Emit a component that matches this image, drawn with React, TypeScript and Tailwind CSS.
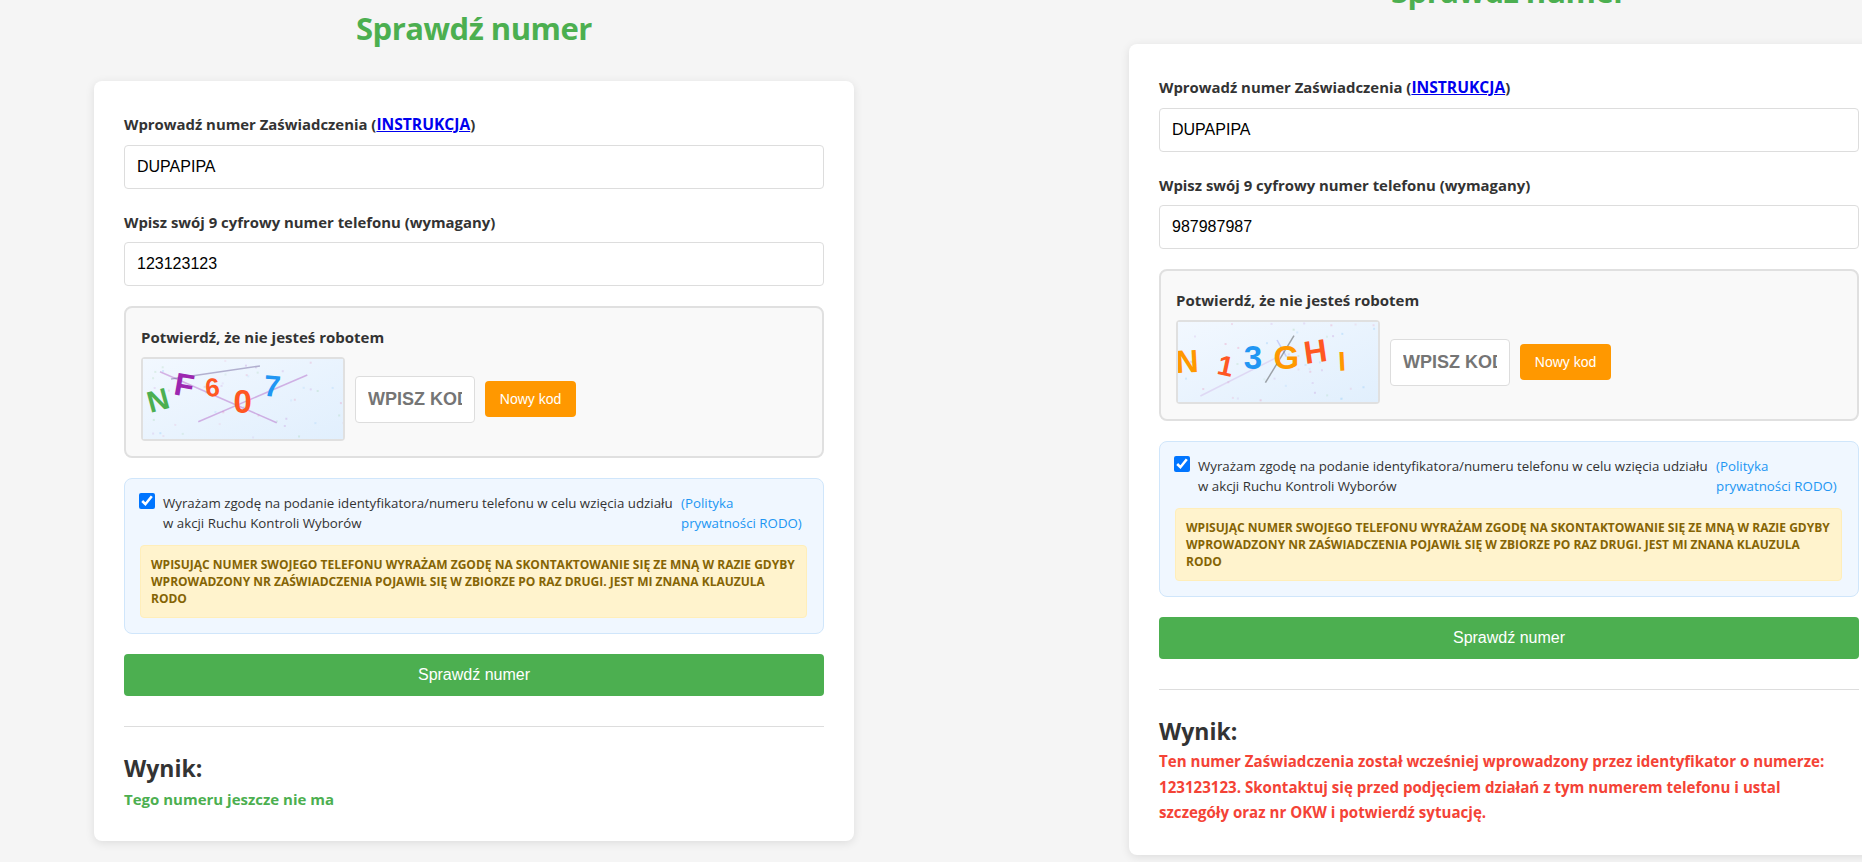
import React from 'react';

type Glyph = { ch: string; x: number; y: number; size: number; rot: number; color: string };
type Stroke = { x1: number; y1: number; x2: number; y2: number; color: string; width: number };

// Losowe kropki tła captcha, ze stałym ziarnem
function makeDots(seed: number) {
  const colors = ['#2196F3', '#9C27B0', '#4CAF50', '#E91E63'];
  let s = seed;
  const next = () => {
    s = (s * 1103515245 + 12345) % 2147483648;
    return s / 2147483648;
  };
  return Array.from({ length: 46 }, () => ({
    x: next() * 200,
    y: next() * 80,
    color: colors[Math.floor(next() * 4)],
    o: 0.06 + next() * 0.1,
  }));
}

function Captcha({ id, seed, glyphs, strokes }: { id: string; seed: number; glyphs: Glyph[]; strokes: Stroke[] }) {
  return (
    <div className="w-[204px] h-[84px] shrink-0 border-2 border-[#e0e0e0] rounded">
      <svg width="200" height="80" viewBox="0 0 200 80" className="block">
        <defs>
          <linearGradient id={id} x1="0" y1="0" x2="1" y2="1">
            <stop offset="0" stopColor="#f2f8ff" />
            <stop offset="1" stopColor="#e1effd" />
          </linearGradient>
        </defs>
        <rect width="200" height="80" fill={`url(#${id})`} />
        {makeDots(seed).map((d, i) => (
          <rect key={i} x={d.x} y={d.y} width="2" height="2" fill={d.color} opacity={d.o} />
        ))}
        {strokes.map((l, i) => (
          <line key={i} x1={l.x1} y1={l.y1} x2={l.x2} y2={l.y2} stroke={l.color} strokeWidth={l.width} />
        ))}
        {glyphs.map((g, i) => (
          <text
            key={i}
            x={0}
            y={0}
            transform={`translate(${g.x} ${g.y}) rotate(${g.rot})`}
            textAnchor="middle"
            dominantBaseline="central"
            fontFamily="'Liberation Sans', Arial, sans-serif"
            fontWeight="700"
            fontSize={g.size}
            fill={g.color}
          >
            {g.ch}
          </text>
        ))}
      </svg>
    </div>
  );
}

function Panel({
  phone,
  captcha,
  className,
  children,
}: {
  phone: string;
  captcha: React.ReactNode;
  className: string;
  children: React.ReactNode;
}) {
  return (
    <div className={className}>
      {/* Nagłówek */}
      <h1 className="h-[57px] pt-[8px] text-center text-[31px] leading-[40px] tracking-[-0.5px] font-bold text-[#4CAF50]">Sprawdź numer</h1>

      <div className="mt-[24px] bg-white rounded-lg shadow-[0_2px_10px_rgba(0,0,0,0.1)] p-[30px] pb-[16px]">
        <label className="block h-[26px] text-[14.9px] leading-[26px] font-bold text-[#333]">
          Wprowadź numer Zaświadczenia (<a href="#" className="text-[15.6px] text-[#0000EE] underline">INSTRUKCJA</a>)
        </label>
        <input
          readOnly
          defaultValue="DUPAPIPA"
          className="mt-[8px] block w-full h-[44px] px-3 border border-[#ddd] rounded text-base text-black font-['Liberation_Sans',Arial,sans-serif]"
        />

        <label className="block text-[14.9px] leading-[26px] font-bold text-[#333] mt-[20px]">
          Wpisz swój 9 cyfrowy numer telefonu (wymagany)
        </label>
        <input
          readOnly
          defaultValue={phone}
          className="mt-[7px] block w-full h-[44px] px-3 border border-[#ddd] rounded text-base text-black font-['Liberation_Sans',Arial,sans-serif]"
        />

        {/* Captcha */}
        <div className="mt-[20px] h-[152px] border-2 border-[#e0e0e0] rounded-lg bg-[#f9f9f9] px-[15px] pt-[16px]">
          <div className="text-[15px] leading-[26px] font-bold text-[#333]">Potwierdź, że nie jesteś robotem</div>
          <div className="mt-[7px] flex items-center gap-[10px]">
            {captcha}
            <input
              readOnly
              placeholder="WPISZ KOD"
              className="w-[120px] h-[47px] px-3 bg-white border border-[#ddd] rounded text-[18px] font-bold text-[#757575] placeholder:text-[#757575] font-['Liberation_Sans',Arial,sans-serif]"
            />
            <button className="w-[91px] h-[36px] bg-[#FF9800] text-white text-sm rounded font-['Liberation_Sans',Arial,sans-serif]">
              Nowy kod
            </button>
          </div>
        </div>

        {/* Zgoda */}
        <div className="mt-[20px] h-[156px] border border-[#d0e6fb] rounded-lg bg-[#f0f7ff] pt-[14px] pl-[14px] pr-[16px]">
          <div className="flex items-start text-[13.3px] leading-[20px] text-[#333]">
            <input type="checkbox" defaultChecked readOnly className="w-4 h-4 mr-[8px] shrink-0" />
            <span className="w-[512px] shrink-0">Wyrażam zgodę na podanie identyfikatora/numeru telefonu w celu wzięcia udziału w akcji Ruchu Kontroli Wyborów</span>
            <a href="#" className="ml-[6px] text-[#2196F3]">(Polityka prywatności RODO)</a>
          </div>
          <div className="mt-[12px] ml-[1px] h-[73px] border border-[#ffeeba] rounded bg-[#fff3cd] px-[10px] pt-[10px] text-[12px] leading-[17.2px] font-bold text-[#856404]">
            WPISUJĄC NUMER SWOJEGO TELEFONU WYRAŻAM ZGODĘ NA SKONTAKTOWANIE SIĘ ZE MNĄ W RAZIE GDYBY WPROWADZONY NR ZAŚWIADCZENIA POJAWIŁ SIĘ W ZBIORZE PO RAZ DRUGI. JEST MI ZNANA KLAUZULA RODO
          </div>
        </div>

        <button className="mt-[20px] block w-full h-[42px] bg-[#4CAF50] text-white text-base rounded font-['Liberation_Sans',Arial,sans-serif]">
          Sprawdź numer
        </button>

        <hr className="mt-[30px] border-0 h-[1px] bg-[#ddd]" />

        {/* Wynik */}
        <h2 className="mt-[25px] text-[23px] leading-[32px] font-bold text-[#333]">Wynik:</h2>
        {children}
      </div>
    </div>
  );
}

export default function App() {
  return (
    <div className="h-[862px] overflow-hidden bg-[#f5f5f5] pl-[94px] flex items-start font-['Open_Sans',sans-serif]">
      <Panel
        phone="123123123"
        className="w-[760px] shrink-0"
        captcha={
          <Captcha
            id="cap1"
            seed={17}
            strokes={[
              { x1: 17, y1: 12.7, x2: 133.7, y2: 63.7, color: 'rgba(156,39,176,0.33)', width: 1.5 },
              { x1: 55.3, y1: 62.7, x2: 164.3, y2: 16, color: 'rgba(156,39,176,0.33)', width: 1.5 },
              { x1: 28, y1: 20, x2: 117, y2: 7, color: 'rgba(70,50,120,0.35)', width: 1.5 },
            ]}
            glyphs={[
              { ch: 'N', x: 15, y: 41, size: 30, rot: -15, color: '#4CAF50' },
              { ch: 'F', x: 41.3, y: 26, size: 32, rot: 10, color: '#9C27B0' },
              { ch: '6', x: 69.3, y: 28.5, size: 26, rot: -5, color: '#FF5722' },
              { ch: '0', x: 99.7, y: 42, size: 33, rot: 0, color: '#FF5722' },
              { ch: '7', x: 129.3, y: 27, size: 30, rot: 5, color: '#2196F3' },
            ]}
          />
        }
      >
        <p className="mt-[2px] text-[15px] leading-[26px] font-bold text-[#4CAF50] pb-[13px]">Tego numeru jeszcze nie ma</p>
      </Panel>

      <Panel
        phone="987987987"
        className="w-[760px] shrink-0 ml-[275px] -mt-[37px]"
        captcha={
          <Captcha
            id="cap2"
            seed={91}
            strokes={[
              { x1: 22.4, y1: 74, x2: 98.4, y2: 35.7, color: 'rgba(156,39,176,0.13)', width: 1.5 },
              { x1: 99, y1: 18, x2: 108.4, y2: 34.7, color: 'rgba(90,90,230,0.25)', width: 1.5 },
              { x1: 87.4, y1: 60.7, x2: 116, y2: 13.7, color: 'rgba(60,60,60,0.45)', width: 1.5 },
            ]}
            glyphs={[
              { ch: 'N', x: 9, y: 39.5, size: 32, rot: -3, color: '#FF9800' },
              { ch: '1', x: 47.7, y: 44, size: 28, rot: 12, color: '#FF5722' },
              { ch: '3', x: 75, y: 35.5, size: 33, rot: 0, color: '#2196F3' },
              { ch: 'G', x: 108.4, y: 35.5, size: 33, rot: 0, color: '#FF9800' },
              { ch: 'H', x: 137.4, y: 29.5, size: 32, rot: -8, color: '#FF5722' },
              { ch: 'I', x: 164, y: 39.5, size: 27, rot: -3, color: '#FF9800' },
            ]}
          />
        }
      >
        <p className="mt-[2px] text-[15.1px] leading-[25.6px] font-bold text-[#F44336] pb-[13px]">
          Ten numer Zaświadczenia został wcześniej wprowadzony przez identyfikator o numerze: 123123123. Skontaktuj się przed podjęciem działań z tym numerem telefonu i ustal
          <br />
          szczegóły oraz nr OKW i potwierdź sytuację.
        </p>
      </Panel>
    </div>
  );
}
